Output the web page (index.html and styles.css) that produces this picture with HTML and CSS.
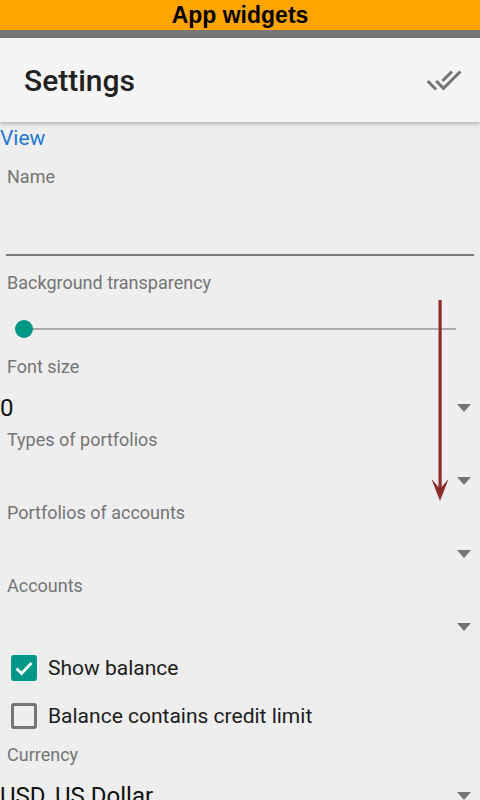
FILE: index.html
```html
<!DOCTYPE html>
<html>
<head>
<meta charset="utf-8">
<link rel="stylesheet" href="styles.css">
</head>
<body>
<div class="screen">
  <div class="topbar">App widgets</div>
  <div class="statusbar"></div>
  <header class="appbar">
    <h1 class="title">Settings</h1>
    <svg class="done-all" viewBox="0 0 24 24" width="36" height="36" aria-hidden="true">
      <path fill="#757575" d="M18 7l-1.41-1.41-6.34 6.34 1.41 1.41L18 7zm4.24-1.41L11.66 16.17 7.48 12l-1.41 1.41L11.66 19l12-12-1.42-1.41zM.41 13.41L6 19l1.41-1.41L1.83 12 .41 13.41z"/>
    </svg>
  </header>
  <main class="content">
    <div class="view">View</div>

    <div class="text-field">
      <div class="label">Name</div>
      <div class="input"></div>
    </div>

    <div class="label pad">Background transparency</div>
    <div class="slider">
      <div class="track"><span class="thumb"></span></div>
    </div>

    <div class="label pad">Font size</div>
    <div class="spinner"><span class="value">0</span><span class="caret"></span></div>

    <div class="label pad">Types of portfolios</div>
    <div class="spinner"><span class="value"></span><span class="caret"></span></div>

    <div class="label pad">Portfolios of accounts</div>
    <div class="spinner"><span class="value"></span><span class="caret"></span></div>

    <div class="label pad">Accounts</div>
    <div class="spinner"><span class="value"></span><span class="caret"></span></div>

    <div class="checks">
      <div class="check-row">
        <span class="box checked">
          <svg viewBox="0 0 26 26" width="26" height="26" aria-hidden="true"><polyline points="5.5,13.5 10.5,18.5 20.5,8" fill="none" stroke="#fff" stroke-width="2.8"/></svg>
        </span>
        <span class="check-text">Show balance</span>
      </div>
      <div class="check-row">
        <span class="box"></span>
        <span class="check-text">Balance contains credit limit</span>
      </div>
    </div>

    <div class="label pad currency">Currency</div>
    <div class="spinner"><span class="value">USD, US Dollar</span><span class="caret"></span></div>

    <svg class="arrow" viewBox="0 0 24 206" width="24" height="206" aria-hidden="true">
      <rect x="10.5" y="2" width="3.2" height="188" fill="#8e2c2c"/>
      <polygon points="3.5,181 12,203 20.5,181 13.6,189 10.5,189" fill="#8e2c2c"/>
    </svg>
  </main>
</div>
</body>
</html>
```

FILE: styles.css
```css
* { box-sizing: border-box; }
html, body { margin: 0; padding: 0; }
body {
  background: #eeeeee;
  font-family: Roboto, "Noto Sans", sans-serif;
  width: 480px;
  height: 800px;
  overflow: hidden;
}
.screen { width: 480px; height: 800px; overflow: hidden; background: #eeeeee; }

.topbar {
  height: 30px;
  line-height: 30px;
  background: #ffa500;
  color: #000;
  text-align: center;
  font-family: "Liberation Sans", Arial, sans-serif;
  font-weight: bold;
  font-size: 23px;
}
.statusbar { height: 8px; background: #777777; }

.appbar {
  position: relative;
  z-index: 2;
  height: 84px;
  background: #f5f5f5;
  display: flex;
  align-items: center;
  justify-content: space-between;
  padding: 0 18px 0 24px;
  box-shadow: 0 2px 4px rgba(0,0,0,0.25);
}
.title {
  margin: 0;
  font-size: 30px;
  font-weight: 500;
  color: #212121;
}
.done-all { display: block; }

.content { position: relative; }

.view {
  height: 32px;
  line-height: 32px;
  font-size: 21px;
  color: #1e78d2;
}

.label {
  height: 24px;
  line-height: 24px;
  font-size: 18px;
  color: #757575;
}
.pad { padding-left: 7px; }

.text-field { margin: 0 6px; padding-top: 11px; }
.text-field .label { padding-left: 1px; }
.input {
  height: 67px;
  border-bottom: 2px solid #7a7a7a;
  margin-bottom: 15px;
}

.slider { height: 60px; padding: 33px 24px 0 24px; }
.track {
  position: relative;
  height: 2px;
  width: 432px;
  background: #ababab;
}
.thumb {
  position: absolute;
  left: -9px;
  top: -8px;
  width: 18px;
  height: 18px;
  border-radius: 50%;
  background: #009688;
}

.spinner {
  height: 49px;
  padding: 17px 0 8px 0;
  display: flex;
  justify-content: space-between;
  align-items: center;
}
.spinner .value {
  height: 24px;
  line-height: 25px;
  font-size: 24px;
  color: #111;
}
.caret {
  width: 0;
  height: 0;
  margin-right: 9px;
  border-left: 7px solid transparent;
  border-right: 7px solid transparent;
  border-top: 8px solid #757575;
}

.checks { margin-top: -3px; }
.check-row {
  height: 48px;
  display: flex;
  align-items: center;
  padding-left: 11px;
  gap: 11px;
}
.box {
  width: 26px;
  height: 26px;
  border: 3px solid #757575;
  border-radius: 3px;
  display: flex;
}
.box.checked { background: #009688; border: none; }
.box svg { display: block; }
.check-text {
  font-size: 21px;
  color: #1c1c1c;
}
.currency { margin-top: 3px; }

.arrow {
  position: absolute;
  left: 428px;
  top: 176px;
}
```
